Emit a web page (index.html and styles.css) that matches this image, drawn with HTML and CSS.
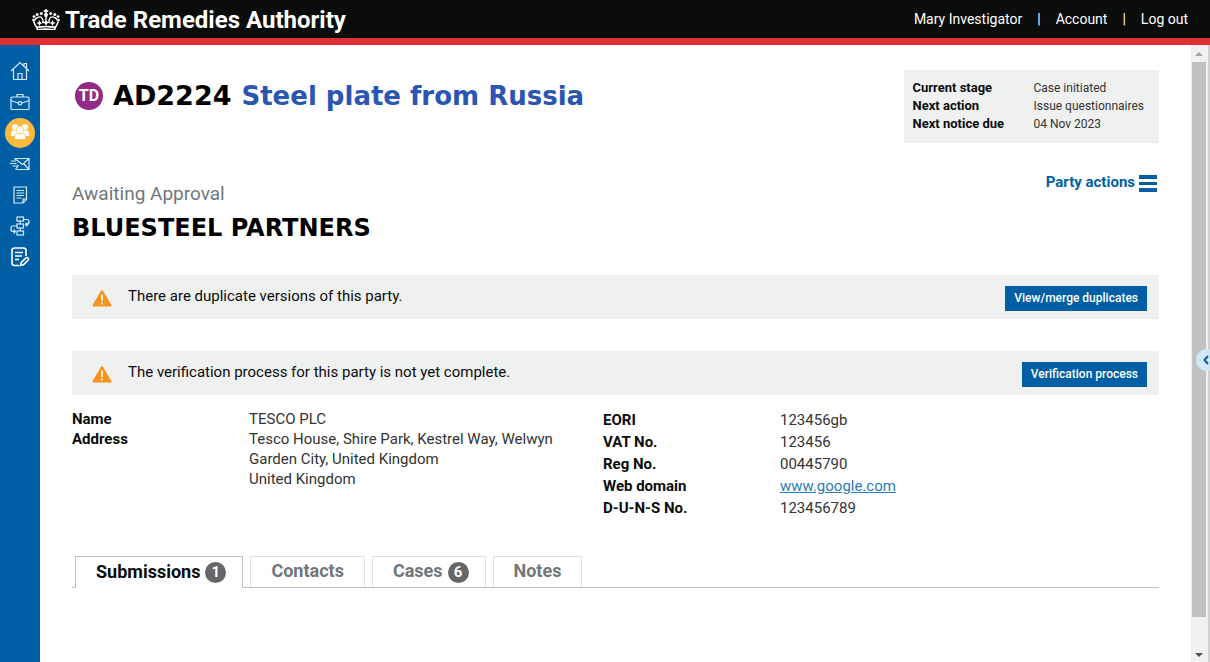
FILE: index.html
```html
<!DOCTYPE html>
<html lang="en">
<head>
<meta charset="utf-8">
<title>Trade Remedies Authority</title>
<link rel="stylesheet" href="styles.css">
</head>
<body>
<header class="topbar">
  <a class="brand" href="#">
    <svg class="crown" viewBox="0 0 28 22" aria-hidden="true">
      <g fill="#fff">
        <path d="M13.200 0h1.600v1.300h1.500v1.600h-1.500v1.600h-1.600V2.900h-1.500V1.300h1.500z"/>
        <circle cx="14" cy="6" r="2"/>
        <circle cx="9.400" cy="4.600" r="1.500"/><circle cx="18.600" cy="4.600" r="1.500"/>
        <circle cx="5.200" cy="5.400" r="1.500"/><circle cx="22.800" cy="5.400" r="1.500"/>
        <circle cx="2" cy="7.600" r="1.400"/><circle cx="26" cy="7.600" r="1.400"/>
        <circle cx="1.400" cy="11" r="1.300"/><circle cx="26.600" cy="11" r="1.300"/>
        <path d="M3.800 17.600Q14 15.800 24.200 17.600L23.400 21H4.600z"/>
        <path d="M14 10.200l1.200 2.300 2.300 1-2.300 1L14 16.800l-1.200-2.300-2.300-1 2.300-1zM7.500 11l1 2.200 2 .8-2 1-1 2-1-2-2-1 2-.8zM20.500 11l1 2.200 2 .8-2 1-1 2-1-2-2-1 2-.8z"/>
      </g>
      <g fill="none" stroke="#fff" stroke-width="1.400">
        <path d="M4.400 18Q2.600 15.500 1.600 12M23.600 18Q25.400 15.500 26.400 12M14 7v4M5 9Q8.500 6.500 10.200 9.500T10.500 14M23 9Q19.500 6.500 17.800 9.500T17.500 14M2.600 11.500Q3 9.500 5.500 8.500M25.400 11.500Q25 9.500 22.500 8.500"/>
      </g>
      <path stroke="#0b0c0c" stroke-width=".9" fill="none" d="M6 19.500Q14 18 22 19.500"/>
    </svg>
    <span>Trade Remedies Authority</span>
  </a>
  <nav class="account" aria-label="Account">
    <a href="#">Mary Investigator</a><span>|</span><a href="#">Account</a><span>|</span><a href="#">Log out</a>
  </nav>
</header>
<div class="shell">
  <nav class="rail" aria-label="Main">
    <a href="#" aria-label="Home"><svg viewBox="0 0 20 20"><path d="M1 10 10 1.500 19 10M3.500 8.500V18.500h13V8.500M8 18.500v-6h4v6M14 5V2.500h2.500v5"/></svg></a>
    <a href="#" aria-label="Cases"><svg viewBox="0 0 20 20"><rect x="1" y="5" width="18" height="12.500" rx="1"/><path d="M7 5V2.500h6V5M1 8.500 8 11M19 8.500 12 11"/><circle cx="10" cy="11.300" r="1.700"/></svg></a>
    <a class="current" href="#" aria-label="Parties" aria-current="page"><svg class="people" viewBox="0 0 20 20"><circle cx="5" cy="4" r="3"/><circle cx="15" cy="4" r="3"/><path d="M.8 13V10.500q0-3 3-3h12.400q3 0 3 3V13z"/><g class="front"><circle cx="10" cy="6.800" r="3.700"/><path d="M4.500 16.500V14q0-3.500 3.500-3.500h4q3.500 0 3.500 3.500v2.500z"/></g></svg></a>
    <a href="#" aria-label="Messages"><svg viewBox="0 0 20 20"><path d="M4.500 4.500h14.500v11H6.500M4.500 4.500l8 6 6.500-6M8.500 11l-3 4.500M14 10l5 5.500M1 7h5M0 9.500h6.500M2.500 12h5"/></svg></a>
    <a href="#" aria-label="Documents"><svg viewBox="0 0 20 20"><path d="M4 2h12.500v12.500L13 18H4zM16.500 14H13v4M6.500 5.500H14M6.500 8H14M6.500 10.500H14M6.500 13h5"/></svg></a>
    <a href="#" aria-label="Workflow"><svg viewBox="0 0 20 20"><rect x="7" y="1" width="6.500" height="4"/><rect x="7" y="8" width="6.500" height="4"/><rect x="7" y="15" width="6.500" height="4"/><path d="M10.200 5v3M10.200 12v3M13.500 3.500H17q2 0 2 2V6.500q0 2-2.500 2M17.500 6.500 15.500 8.500l2 2M7 10H3q-2 0-2 2v1.500q0 2 2 2h2M3.500 13.500l2 2-2 2"/></svg></a>
    <a href="#" aria-label="Edit notes"><svg class="bold" viewBox="0 0 20 20"><path d="M9 18.500H4.500q-2.500 0-2.500-2.500V3.500Q2 1 4.500 1h9Q16 1 16 3.500V9M5 5.500h8M5 9h7M5 12.500h4M10.500 18.500l.8-3.200 4.700-4.500q1.200-.6 2 .2t.2 2l-4.700 4.700z"/></svg></a>
  </nav>
  <main class="content">
    <div class="case-head">
      <h1 class="case-title"><span class="case-type">TD</span><span>AD2224</span><a href="#">Steel plate from Russia</a></h1>
      <dl class="stage">
        <dt>Current stage</dt><dd>Case initiated</dd>
        <dt>Next action</dt><dd>Issue questionnaires</dd>
        <dt>Next notice due</dt><dd>04 Nov 2023</dd>
      </dl>
    </div>
    <div class="party-head">
      <div>
        <p class="status">Awaiting Approval</p>
        <h2 class="party-name">BLUESTEEL PARTNERS</h2>
      </div>
      <button class="party-actions" type="button">Party actions<span class="bars"></span></button>
    </div>
    <section class="notice">
      <svg class="warn" viewBox="0 0 20 18" aria-hidden="true"><path fill="#f7931e" stroke="#f7931e" stroke-width="2" stroke-linejoin="round" d="M10 2 18.500 16.500H1.500z"/><path stroke="#fff" stroke-width="1.600" d="M10 5.500v6.500M10 13.500v2"/></svg>
      <p>There are duplicate versions of this party.</p>
      <button class="btn" type="button">View/merge duplicates</button>
    </section>
    <section class="notice">
      <svg class="warn" viewBox="0 0 20 18" aria-hidden="true"><path fill="#f7931e" stroke="#f7931e" stroke-width="2" stroke-linejoin="round" d="M10 2 18.500 16.500H1.500z"/><path stroke="#fff" stroke-width="1.600" d="M10 5.500v6.500M10 13.500v2"/></svg>
      <p>The verification process for this party is not yet complete.</p>
      <button class="btn" type="button">Verification process</button>
    </section>
    <div class="details">
      <dl class="facts">
        <dt>Name</dt><dd>TESCO PLC</dd>
        <dt>Address</dt><dd>Tesco House, Shire Park, Kestrel Way, Welwyn<br>Garden City, United Kingdom<br>United Kingdom</dd>
      </dl>
      <dl class="facts loose">
        <dt>EORI</dt><dd>123456gb</dd>
        <dt>VAT No.</dt><dd>123456</dd>
        <dt>Reg No.</dt><dd>00445790</dd>
        <dt>Web domain</dt><dd><a href="#">www.google.com</a></dd>
        <dt>D-U-N-S No.</dt><dd>123456789</dd>
      </dl>
    </div>
    <div class="tabs" role="tablist">
      <button class="tab active" type="button" role="tab" aria-selected="true">Submissions<span class="count">1</span></button>
      <button class="tab" type="button" role="tab" aria-selected="false">Contacts</button>
      <button class="tab" type="button" role="tab" aria-selected="false">Cases<span class="count">6</span></button>
      <button class="tab" type="button" role="tab" aria-selected="false">Notes</button>
    </div>
  </main>
  <div class="scroll" aria-hidden="true"><span class="arrow up"></span><span class="thumb"></span><span class="arrow down"></span></div>
  <button class="drawer" type="button" aria-label="Open panel"><svg viewBox="0 0 6 10"><path d="M5 1 1.500 5 5 9"/></svg></button>
</div>
</body>
</html>
```
FILE: styles.css
```css
* { box-sizing: border-box; }
body {
  margin: 0;
  height: 100vh;
  display: flex;
  flex-direction: column;
  overflow: hidden;
  background: #fff;
  color: #0b0c0c;
  font: 15px/20px Roboto, "Liberation Sans", sans-serif;
}
h1, h2, p, dl, dd { margin: 0; }
button { font: inherit; color: inherit; border: 0; padding: 0; background: none; cursor: pointer; }
dt { font-weight: 700; }
.topbar {
  flex: none;
  display: flex;
  justify-content: space-between;
  align-items: center;
  height: 45px;
  padding: 0 22px 0 32px;
  background: #0b0c0c;
  border-bottom: 7px solid #df3034;
  color: #fff;
}
.topbar a { color: #fff; text-decoration: none; }
.brand { display: flex; align-items: center; gap: 5px; font-size: 24px; font-weight: 700; line-height: 24px; padding-top: 2px; }
.crown { width: 28px; height: 22px; }
.account { display: flex; gap: 15px; font-size: 14px; }
.shell { flex: 1; min-height: 0; display: flex; position: relative; }
.rail { flex: none; width: 40px; padding-top: 11px; background: #005ea5; display: flex; flex-direction: column; align-items: center; gap: 1px; }
.rail a { width: 30px; height: 30px; display: flex; align-items: center; justify-content: center; border-radius: 50%; }
.rail svg { width: 20px; height: 20px; fill: none; stroke: #d5eaf7; stroke-width: 1.2; }
.rail svg.bold { stroke: #fff; stroke-width: 1.6; }
.rail .current { background: #fdb93e; }
.rail svg.people { fill: #fff; stroke: none; }
.people .front { stroke: #fdb93e; stroke-width: 0.6; }
.content { flex: 1; min-width: 0; padding: 25px 32px 0; }
.case-head { display: flex; justify-content: space-between; align-items: flex-start; }
.case-title { display: flex; align-items: center; gap: 10px; padding: 7px 0 0 3px; font: 700 27px/38px "DejaVu Sans", sans-serif; color: #000; }
.case-title a { color: #2b55b3; font-size: 26px; text-decoration: none; }
.case-type { width: 28px; height: 28px; border-radius: 50%; background: #912b88; color: #fff; font: 700 16px/28px Roboto, sans-serif; text-align: center; }
.stage { display: grid; grid-template-columns: 121px auto; padding: 9px 15px 10px 9px; background: #eff1f1; font-size: 13px; line-height: 18px; }
.stage dd { font-size: 12px; }
.stage dd, .facts dd { color: #333; }
.party-head { display: flex; justify-content: space-between; align-items: flex-start; margin-top: 27px; }
.status { padding-top: 12px; font-size: 19px; line-height: 24px; color: #6f777b; }
.party-name { margin-top: 5px; font: 700 24px/34px "DejaVu Sans", sans-serif; color: #000; }
.party-actions { display: flex; align-items: center; gap: 4px; padding: 2px 2px 0 0; color: #005ea5; font-weight: 700; }
.bars { width: 18px; height: 17px; margin-top: 2px; border-top: 4px solid #005ea5; border-bottom: 4px solid #005ea5; background: linear-gradient(#fff 0 3px, #005ea5 3px 6px, #fff 6px); }
.notice { display: flex; align-items: flex-start; height: 44px; margin-bottom: 32px; padding: 11px 12px 0 20px; background: #eff1f1; }
.party-head + .notice { margin-top: 30px; }
.warn { width: 20px; height: 18px; margin-top: 3px; }
.notice p { flex: 1; padding-left: 16px; }
.btn { height: 25px; padding: 0 9px 2px; background: #005ea5; color: #fff; font-size: 12px; font-weight: 500; }
.details { display: grid; grid-template-columns: 531px 1fr; margin-top: -18px; }
.facts { display: grid; grid-template-columns: 177px 1fr; align-content: start; }
.facts a { color: #2b7cb8; }
.loose { grid-auto-rows: 20px; row-gap: 2px; padding-top: 1px; }
.tabs { display: flex; gap: 7px; margin-top: 38px; padding-left: 3px; border-bottom: 1px solid #bfc1c3; }
.tab { display: flex; align-items: center; gap: 8px; height: 31px; padding: 0 20px 2px; border: 1px solid #dee0e2; border-bottom: 0; color: #6f777b; font-size: 18px; font-weight: 700; }
.tab:has(.count) { gap: 5px; padding-right: 16px; }
.tab.active { height: 32px; margin-bottom: -1px; background: #fff; border-color: #bfc1c3; color: #0b0c0c; }
.count { width: 21px; height: 21px; margin-top: 2px; border-radius: 50%; background: #666; color: #fff; font-size: 15px; line-height: 21px; text-align: center; }
.scroll { flex: none; width: 19px; display: flex; flex-direction: column; align-items: center; padding: 7px 1px 5px 0; background: #f1f1f1; border-right: 2px solid #d0d0d0; }
.thumb { width: 14px; flex: 1; margin: 6px 0 36px; background: #c1c1c1; }
.arrow { border: 4px solid transparent; }
.up { border-top: 0; border-bottom-color: #a3a3a3; }
.down { border-bottom: 0; border-top-color: #505050; }
.drawer { position: absolute; right: -8px; top: 304px; width: 22px; height: 22px; border-radius: 50%; background: #d3e6f3; padding-left: 7px; }
.drawer svg { display: block; width: 6px; height: 10px; fill: none; stroke: #005ea5; stroke-width: 2; }
```
